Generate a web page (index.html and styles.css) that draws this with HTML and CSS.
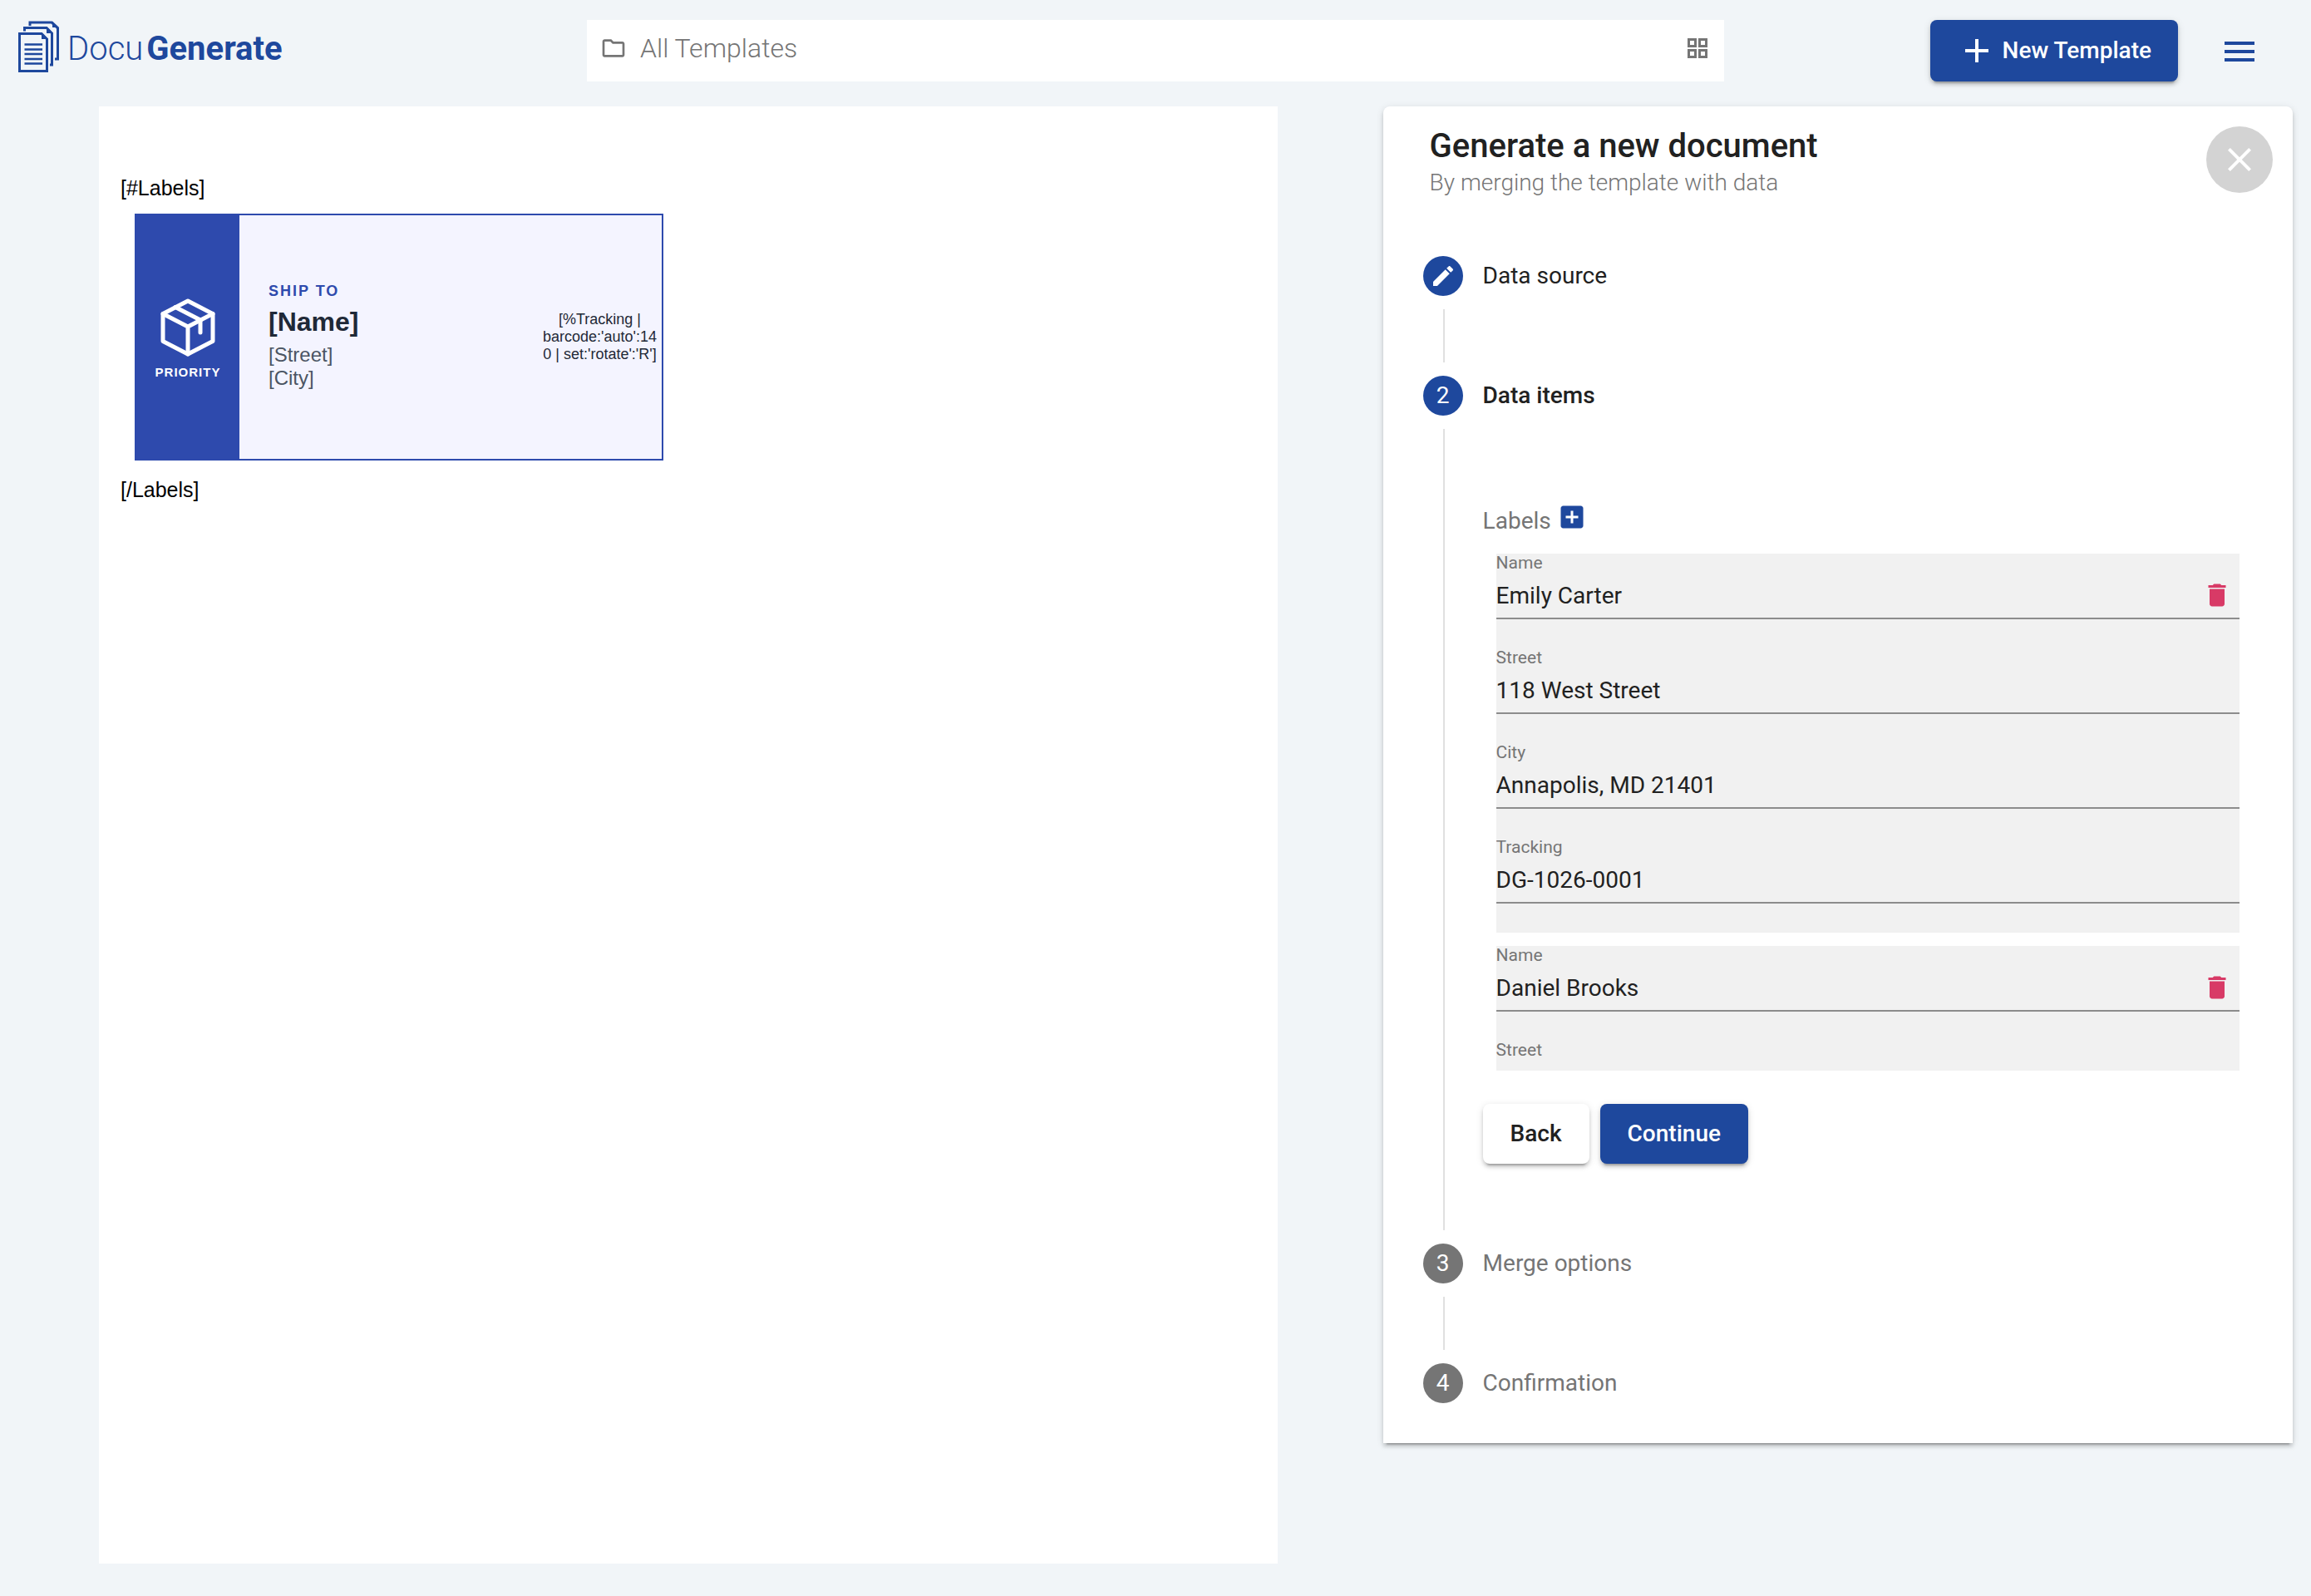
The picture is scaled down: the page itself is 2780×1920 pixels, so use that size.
FILE: index.html
```html
<!doctype html>
<html lang="en">

<head>
<meta charset="utf-8">
<title>DocuGenerate</title>
<link rel="stylesheet" href="styles.css">
</head>

<body>

    <header class="topbar">
        <a class="logo" href="#">
            <svg width="49" height="62" viewBox="0 0 49 62" fill="none" stroke="currentColor" stroke-width="3" aria-hidden="true">
                <path d="M14 6V2H40L47.500 9V46H44"/>
                <path d="M7.500 12.500V8.500H34L40.500 15V53H38"/>
                <path d="M1.500 15.500H28L34.500 22V60.500H1.500Z"/>
                <path d="M41 .5L49 8H41ZM34 7L42 15H34ZM28 14L36 22H28Z" fill="currentColor" stroke="none"/>
                <path d="M7.500 28.500H29M7.500 34.500H29M7.500 40H29M7.500 46H29M7.500 51.500H29" stroke-width="2.600"/>
            </svg>
            <span class="logo-text">Docu<b>Generate</b></span>
        </a>

        <div class="search">
            <svg width="32" height="32" viewBox="0 0 24 24" fill="currentColor" aria-hidden="true">
                <path d="M9.170 6l2 2H20v10H4V6h5.170M10 4H4c-1.100 0-1.990.9-1.990 2L2 18c0 1.100.9 2 2 2h16c1.100 0 2-.9 2-2V8c0-1.100-.9-2-2-2h-8l-2-2z"/>
            </svg>
            <input type="text" value="All Templates" aria-label="Templates folder">
            <button class="icon-btn" aria-label="Grid view">
                <svg width="24" height="24" viewBox="0 0 24 24" fill="none" stroke="currentColor" stroke-width="3">
                    <path d="M1.500 1.500h8v8h-8zM14.500 1.500h8v8h-8zM1.500 14.500h8v8h-8zM14.500 14.500h8v8h-8z"/>
                </svg>
            </button>
        </div>

        <div class="actions">
            <button class="btn btn-primary btn-new">
                <svg width="48" height="48" viewBox="0 0 24 24" fill="currentColor" aria-hidden="true"><path d="M19 13h-6v6h-2v-6H5v-2h6V5h2v6h6v2z"/></svg>
                New Template
            </button>
            <button class="icon-btn menu" aria-label="Menu">
                <svg width="36" height="24" viewBox="0 0 36 24" fill="currentColor"><path d="M0 0h36v4H0zM0 10h36v4H0zM0 20h36v4H0z"/></svg>
            </button>
        </div>
    </header>

    <main class="content">

        <section class="page">
            <p>[#Labels]</p>
            <div class="card">
                <div class="card-side">
                    <svg width="66" height="70" viewBox="0 0 66 70" fill="none" stroke="currentColor" stroke-width="5" stroke-linejoin="round" stroke-linecap="round" aria-hidden="true">
                        <path d="M33 3L63 18.500V51.500L33 67L3 51.500V18.500Z"/>
                        <path d="M3 18.500L33 34L63 18.500M33 34V67"/>
                        <path d="M18 10.500L48 26V41"/>
                    </svg>
                    <span>PRIORITY</span>
                </div>
                <div class="card-info">
                    <p class="ship">SHIP TO</p>
                    <p class="name">[Name]</p>
                    <p class="addr">[Street]</p>
                    <p class="addr">[City]</p>
                </div>
                <div class="card-code">[%Tracking | barcode:'auto':140 | set:'rotate':'R']</div>
            </div>
            <p>[/Labels]</p>
        </section>

        <section class="panel">
            <div class="panel-head">
                <div>
                    <h1>Generate a new document</h1>
                    <p>By merging the template with data</p>
                </div>
                <button class="close" aria-label="Close">
                    <svg width="48" height="48" viewBox="0 0 24 24" fill="currentColor"><path d="M19 6.410L17.590 5 12 10.590 6.410 5 5 6.410 10.590 12 5 17.590 6.410 19 12 13.410 17.590 19 19 17.590 13.410 12z"/></svg>
                </button>
            </div>

            <div class="step done">
                <span class="dot">
                    <svg width="32" height="32" viewBox="0 0 24 24" fill="currentColor" aria-hidden="true"><path d="M3 17.250V21h3.750L17.810 9.940l-3.750-3.750L3 17.250zM20.710 7.040c.39-.39.39-1.020 0-1.410l-2.340-2.340c-.39-.39-1.020-.39-1.410 0l-1.830 1.830 3.750 3.750 1.830-1.830z"/></svg>
                </span>
                <h2>Data source</h2>
                <div class="line"></div>
            </div>

            <div class="step current">
                <span class="dot">2</span>
                <h2>Data items</h2>
                <div class="line"></div>
                <form class="step-body">
                    <div class="list-title">
                        <span>Labels</span>
                        <button type="button" class="icon-btn add" aria-label="Add label">
                            <svg width="36" height="36" viewBox="0 0 24 24" fill="currentColor"><path d="M19 3H5c-1.110 0-2 .9-2 2v14c0 1.100.89 2 2 2h14c1.100 0 2-.9 2-2V5c0-1.100-.9-2-2-2zm-2 10h-4v4h-2v-4H7v-2h4V7h2v4h4v2z"/></svg>
                        </button>
                    </div>

                    <div class="list">
                        <div class="item">
                            <div class="field">
                                <label for="name1">Name</label>
                                <div class="control">
                                    <input type="text" id="name1" value="Emily Carter">
                                    <button type="button" class="icon-btn del" aria-label="Delete">
                                        <svg width="36" height="36" viewBox="0 0 24 24" fill="currentColor"><path d="M6 19c0 1.100.9 2 2 2h8c1.100 0 2-.9 2-2V7H6v12zM19 4h-3.500l-1-1h-5l-1 1H5v2h14V4z"/></svg>
                                    </button>
                                </div>
                            </div>
                            <div class="field">
                                <label for="street1">Street</label>
                                <div class="control"><input type="text" id="street1" value="118 West Street"></div>
                            </div>
                            <div class="field">
                                <label for="city1">City</label>
                                <div class="control"><input type="text" id="city1" value="Annapolis, MD 21401"></div>
                            </div>
                            <div class="field">
                                <label for="tracking1">Tracking</label>
                                <div class="control"><input type="text" id="tracking1" value="DG-1026-0001"></div>
                            </div>
                        </div>

                        <div class="item">
                            <div class="field">
                                <label for="name2">Name</label>
                                <div class="control">
                                    <input type="text" id="name2" value="Daniel Brooks">
                                    <button type="button" class="icon-btn del" aria-label="Delete">
                                        <svg width="36" height="36" viewBox="0 0 24 24" fill="currentColor"><path d="M6 19c0 1.100.9 2 2 2h8c1.100 0 2-.9 2-2V7H6v12zM19 4h-3.500l-1-1h-5l-1 1H5v2h14V4z"/></svg>
                                    </button>
                                </div>
                            </div>
                            <div class="field">
                                <label for="street2">Street</label>
                                <div class="control"><input type="text" id="street2"></div>
                            </div>
                        </div>
                    </div>

                    <div class="buttons">
                        <button type="button" class="btn">Back</button>
                        <button type="button" class="btn btn-primary">Continue</button>
                    </div>
                </form>
            </div>

            <div class="step">
                <span class="dot">3</span>
                <h2>Merge options</h2>
                <div class="line"></div>
            </div>

            <div class="step">
                <span class="dot">4</span>
                <h2>Confirmation</h2>
            </div>
        </section>

    </main>

</body>

</html>
```

FILE: styles.css
```css
*{
    margin: 0;
    padding: 0;
    box-sizing: border-box;
}
body{
    background: #f1f5f8;
    color: #212121;
    font-family: Roboto, "Liberation Sans", sans-serif;
    font-size: 28px;
    line-height: 36px;
}
button, input{
    font: inherit;
    color: inherit;
    border: 0;
    background: none;
    outline: none;
}
button{
    cursor: pointer;
}
svg{
    display: block;
    flex: none;
}

/* buttons */
.btn{
    height: 72px;
    padding: 0 33px;
    border-radius: 8px;
    background: white;
    font-weight: 500;
    white-space: nowrap;
    box-shadow: 0 6px 2px -4px rgba(0,0,0,.2), 0 4px 4px 0 rgba(0,0,0,.14), 0 2px 10px 0 rgba(0,0,0,.12);
}
.btn-primary{
    background: #1e489d;
    color: white;
}
.icon-btn{
    display: flex;
}

/* top bar */
.topbar{
    display: grid;
    grid-template-columns: 1fr minmax(0, 1368px) 1fr;
    align-items: start;
    height: 128px;
    padding-top: 24px;
}
.logo{
    display: flex;
    align-items: center;
    gap: 10px;
    padding: 1px 0 0 22px;
    color: #1e489d;
    text-decoration: none;
}
.logo-text{
    padding-top: 6px;
    font-size: 40px;
    font-weight: 300;
    line-height: 48px;
}
.logo-text b{
    margin-left: 4px;
    font-weight: 700;
}
.search{
    display: flex;
    align-items: center;
    gap: 16px;
    height: 74px;
    padding: 0 20px 6px 16px;
    background: white;
    color: #757575;
}
.search input{
    flex: 1;
    min-width: 0;
    font-size: 32px;
    font-weight: 300;
}
.actions{
    display: flex;
    justify-content: flex-end;
    align-items: center;
    gap: 56px;
    padding-right: 68px;
}
.btn-new{
    display: flex;
    align-items: center;
    gap: 7px;
    height: 74px;
    padding: 0 32px;
}
.menu{
    padding-top: 2px;
    color: #1e489d;
}

/* layout */
.content{
    display: grid;
    grid-template-columns: minmax(0, 3fr) minmax(0, 2fr);
    align-items: start;
    padding: 0 22px 39px;
}

/* template preview */
.page{
    min-height: calc(100vh - 167px);
    margin: 0 127px 0 97px;
    padding: 84px 26px;
    background: white;
    color: black;
    font-family: "Liberation Sans", Arial, sans-serif;
    font-size: 25px;
    line-height: 29px;
}
.card{
    display: flex;
    width: 636px;
    height: 297px;
    margin: 16px 0 21px 17px;
    border: 2px solid #2e4aad;
    background: #f4f4ff;
    color: #1f2937;
}
.card-side{
    display: flex;
    flex-direction: column;
    align-items: center;
    justify-content: center;
    gap: 10px;
    width: 124px;
    padding-top: 4px;
    background: #2e4aad;
    color: white;
    font-size: 15px;
    font-weight: bold;
    line-height: 17px;
    letter-spacing: 1px;
}
.card-info{
    flex: 1;
    align-self: center;
    padding: 0 0 2px 35px;
}
.ship{
    margin-bottom: 8px;
    color: #2e4aad;
    font-size: 18px;
    font-weight: bold;
    line-height: 21px;
    letter-spacing: 2px;
}
.name{
    margin-bottom: 7px;
    font-size: 32px;
    font-weight: bold;
    line-height: 37px;
}
.addr{
    color: #4b5563;
    font-size: 24px;
    line-height: 28px;
}
.card-code{
    align-self: center;
    width: 141px;
    margin-right: 4px;
    font-size: 18px;
    line-height: 21px;
    text-align: center;
    overflow-wrap: break-word;
}

/* generate panel */
.panel{
    padding-bottom: 48px;
    border-radius: 8px 8px 0 0;
    background: white;
    box-shadow: 0 6px 2px -4px rgba(0,0,0,.2), 0 4px 4px 0 rgba(0,0,0,.14), 0 2px 10px 0 rgba(0,0,0,.12);
}
.panel-head{
    display: flex;
    justify-content: space-between;
    align-items: flex-start;
    margin-bottom: 70px;
    padding: 24px 24px 0 56px;
}
.panel-head h1{
    margin-bottom: 2px;
    font-size: 40px;
    font-weight: 500;
    line-height: 48px;
}
.panel-head p{
    color: #757575;
    font-weight: 300;
}
.close{
    display: flex;
    align-items: center;
    justify-content: center;
    width: 80px;
    height: 80px;
    border-radius: 50%;
    background: #d3d3d3;
    color: white;
}

/* stepper */
.step{
    display: grid;
    grid-template-columns: 48px minmax(0, 1fr);
    column-gap: 24px;
    align-items: center;
    padding: 0 64px 0 48px;
    color: #757575;
}
.step h2{
    font-size: 28px;
    font-weight: 400;
}
.dot{
    display: flex;
    align-items: center;
    justify-content: center;
    height: 48px;
    border-radius: 50%;
    background: #757575;
    color: white;
}
.line{
    align-self: stretch;
    width: 2px;
    min-height: 64px;
    margin: 16px 0 16px 24px;
    background: #e0e0e0;
}
.done h2, .current h2{
    color: #212121;
}
.current h2{
    font-weight: 500;
}
.done .dot, .current .dot{
    background: #1e489d;
}
.step-body{
    padding: 104px 0 96px;
}

/* data items */
.list-title{
    display: flex;
    align-items: flex-start;
    gap: 7px;
    height: 62px;
}
.list-title span{
    padding-top: 5px;
}
.add{
    color: #1e489d;
}
.list{
    max-height: 622px;
    margin-left: 16px;
    overflow-y: auto;
    scrollbar-width: none;
}
.item{
    margin-bottom: 16px;
    background: #f1f1f1;
}
.field{
    padding-bottom: 35px;
}
.field label{
    display: block;
    font-size: 21px;
    line-height: 22px;
}
.control{
    display: flex;
    align-items: center;
    height: 57px;
    padding-right: 9px;
    border-bottom: 2px solid #8c8c8c;
}
.control input{
    flex: 1;
    min-width: 0;
    padding-top: 2px;
    color: #212121;
}
.del{
    color: #d83a66;
}
.buttons{
    display: flex;
    gap: 13px;
    margin-top: 40px;
    color: #212121;
}
```
